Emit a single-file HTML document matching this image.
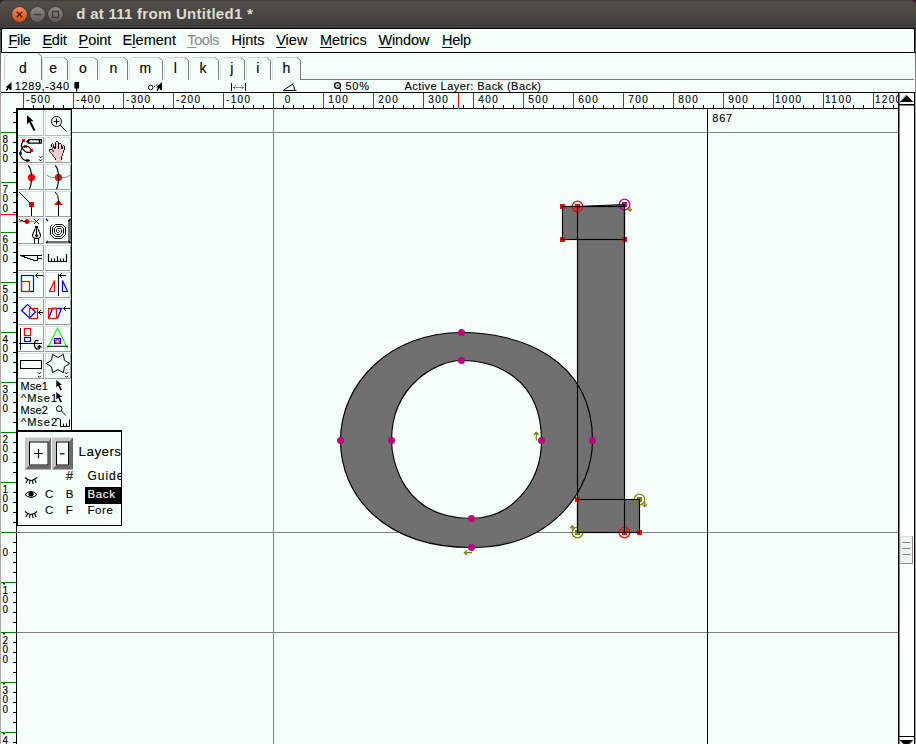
<!DOCTYPE html>
<html><head><meta charset="utf-8"><title>d at 111 from Untitled1 *</title>
<style>
html,body{margin:0;padding:0;background:#f5fffa;overflow:hidden}
svg{display:block;font-family:"Liberation Sans",sans-serif}
</style></head><body>
<svg width="916" height="744" viewBox="0 0 916 744">
<rect x="0" y="0" width="916" height="744" fill="#f5fffa"/>
<defs>
<linearGradient id="tb" x1="0" y1="0" x2="0" y2="1"><stop offset="0" stop-color="#3b3a36"/><stop offset="0.06" stop-color="#514f49"/><stop offset="1" stop-color="#3d3c38"/></linearGradient>
<linearGradient id="cl" x1="0" y1="0" x2="0" y2="1"><stop offset="0" stop-color="#f58a62"/><stop offset="1" stop-color="#dc4a1a"/></linearGradient>
<linearGradient id="gb" x1="0" y1="0" x2="0" y2="1"><stop offset="0" stop-color="#8a8983"/><stop offset="1" stop-color="#5d5c56"/></linearGradient>
</defs>
<rect x="0" y="0" width="916" height="29" fill="url(#tb)"/>
<path d="M0,0H4Q1,1 0,4Z" fill="#2a2622"/>
<path d="M916,0H912Q915,1 916,4Z" fill="#3a0f1d"/>
<circle cx="19.5" cy="14.5" r="8.1" fill="#363531"/><circle cx="19.5" cy="14.5" r="7.4" fill="url(#cl)"/>
<path d="M16.7,11.7L22.3,17.3M22.3,11.7L16.7,17.3" stroke="#4a1a08" stroke-width="1.4" fill="none"/>
<circle cx="37.5" cy="14.5" r="8.1" fill="#363531"/><circle cx="37.5" cy="14.5" r="7.4" fill="url(#gb)"/>
<path d="M34,14.5H41" stroke="#3c3b37" stroke-width="1.5"/>
<circle cx="55.5" cy="14.5" r="8.1" fill="#363531"/><circle cx="55.5" cy="14.5" r="7.4" fill="url(#gb)"/>
<rect x="52.5" y="11.5" width="6" height="6" fill="none" stroke="#3c3b37" stroke-width="1.3"/>
<text x="76.3" y="18.9" font-size="15" font-weight="bold" textLength="176.5" lengthAdjust="spacing" fill="#dfdbd2">d at 111 from Untitled1 *</text>
<linearGradient id="lf" x1="0" y1="0" x2="0" y2="1"><stop offset="0" stop-color="#3f3e3a"/><stop offset="0.04" stop-color="#6b6a66"/><stop offset="0.1" stop-color="#aba39e"/><stop offset="1" stop-color="#aba39e"/></linearGradient>
<rect x="0" y="29" width="1" height="715" fill="url(#lf)"/>
<rect x="915" y="29" width="1" height="715" fill="url(#lf)"/>
<rect x="1.5" y="28.5" width="913" height="24" fill="#f5fffa" stroke="#000" stroke-width="1"/>
<path d="M2.5,52V29.5H914" stroke="#ffffff" stroke-width="1" fill="none"/>
<text x="8.4" y="45" font-size="14.5" textLength="22.5" lengthAdjust="spacing" fill="#000" stroke="#000" stroke-width="0.12">File</text>
<rect x="8.4" y="47" width="8.9" height="1" fill="#000"/>
<text x="42.4" y="45" font-size="14.5" textLength="24.4" lengthAdjust="spacing" fill="#000" stroke="#000" stroke-width="0.12">Edit</text>
<rect x="42.4" y="47" width="9.7" height="1" fill="#000"/>
<text x="78.6" y="45" font-size="14.5" textLength="32.7" lengthAdjust="spacing" fill="#000" stroke="#000" stroke-width="0.12">Point</text>
<rect x="78.6" y="47" width="9.7" height="1" fill="#000"/>
<text x="122.6" y="45" font-size="14.5" textLength="53.4" lengthAdjust="spacing" fill="#000" stroke="#000" stroke-width="0.12">Element</text>
<rect x="132.3" y="47" width="3.2" height="1" fill="#000"/>
<text x="187.3" y="45" font-size="14.5" textLength="32.2" lengthAdjust="spacing" fill="#8c8c8c" stroke="#8c8c8c" stroke-width="0.12">Tools</text>
<rect x="187.3" y="47" width="8.9" height="1" fill="#8c8c8c"/>
<text x="231.4" y="45" font-size="14.5" textLength="33.2" lengthAdjust="spacing" fill="#000" stroke="#000" stroke-width="0.12">Hints</text>
<rect x="241.9" y="47" width="3.2" height="1" fill="#000"/>
<text x="276.2" y="45" font-size="14.5" textLength="31.2" lengthAdjust="spacing" fill="#000" stroke="#000" stroke-width="0.12">View</text>
<rect x="276.2" y="47" width="9.7" height="1" fill="#000"/>
<text x="319.9" y="45" font-size="14.5" textLength="46.8" lengthAdjust="spacing" fill="#000" stroke="#000" stroke-width="0.12">Metrics</text>
<rect x="319.9" y="47" width="12.1" height="1" fill="#000"/>
<text x="378.4" y="45" font-size="14.5" textLength="51.1" lengthAdjust="spacing" fill="#000" stroke="#000" stroke-width="0.12">Window</text>
<rect x="378.4" y="47" width="13.7" height="1" fill="#000"/>
<text x="442.0" y="45" font-size="14.5" textLength="29.2" lengthAdjust="spacing" fill="#000" stroke="#000" stroke-width="0.12">Help</text>
<rect x="442.0" y="47" width="10.5" height="1" fill="#000"/>
<path d="M301,79.5H914" stroke="#7a7a7a" stroke-width="1" fill="none"/>
<path d="M4.5,80V57.2L8,53.8" stroke="#cfcfcf" fill="none"/>
<path d="M8,53.6H38" stroke="#e6ebe8" fill="none"/>
<path d="M38,53.4L41.5,56.2V80" stroke="#7a7a7a" fill="none"/>
<text x="23" y="72.7" font-size="14" text-anchor="middle" fill="#000" stroke="#000" stroke-width="0.12">d</text>
<path d="M42.5,60.3L45,57.5H64" stroke="#cfcfcf" fill="none"/>
<path d="M42.5,61V80" stroke="#dfe5e2" fill="none"/>
<path d="M63.8,57.4L67.5,60.4V80" stroke="#7a7a7a" fill="none"/>
<text x="53.1" y="72.7" font-size="14" text-anchor="middle" fill="#000" stroke="#000" stroke-width="0.12">e</text>
<path d="M69.5,60.3L72,57.5H94" stroke="#cfcfcf" fill="none"/>
<path d="M69.5,61V80" stroke="#dfe5e2" fill="none"/>
<path d="M93.8,57.4L97.5,60.4V80" stroke="#7a7a7a" fill="none"/>
<text x="82.9" y="72.7" font-size="14" text-anchor="middle" fill="#000" stroke="#000" stroke-width="0.12">o</text>
<path d="M99.5,60.3L102,57.5H124" stroke="#cfcfcf" fill="none"/>
<path d="M99.5,61V80" stroke="#dfe5e2" fill="none"/>
<path d="M123.8,57.4L127.5,60.4V80" stroke="#7a7a7a" fill="none"/>
<text x="113.4" y="72.7" font-size="14" text-anchor="middle" fill="#000" stroke="#000" stroke-width="0.12">n</text>
<path d="M129.5,60.3L132,57.5H159" stroke="#cfcfcf" fill="none"/>
<path d="M129.5,61V80" stroke="#dfe5e2" fill="none"/>
<path d="M158.8,57.4L162.5,60.4V80" stroke="#7a7a7a" fill="none"/>
<text x="145.4" y="72.7" font-size="14" text-anchor="middle" fill="#000" stroke="#000" stroke-width="0.12">m</text>
<path d="M164.5,60.3L167,57.5H185" stroke="#cfcfcf" fill="none"/>
<path d="M164.5,61V80" stroke="#dfe5e2" fill="none"/>
<path d="M184.8,57.4L188.5,60.4V80" stroke="#7a7a7a" fill="none"/>
<text x="175.3" y="72.7" font-size="14" text-anchor="middle" fill="#000" stroke="#000" stroke-width="0.12">l</text>
<path d="M190.5,60.3L193,57.5H215" stroke="#cfcfcf" fill="none"/>
<path d="M190.5,61V80" stroke="#dfe5e2" fill="none"/>
<path d="M214.8,57.4L218.5,60.4V80" stroke="#7a7a7a" fill="none"/>
<text x="203" y="72.7" font-size="14" text-anchor="middle" fill="#000" stroke="#000" stroke-width="0.12">k</text>
<path d="M220.5,60.3L223,57.5H241" stroke="#cfcfcf" fill="none"/>
<path d="M220.5,61V80" stroke="#dfe5e2" fill="none"/>
<path d="M240.8,57.4L244.5,60.4V80" stroke="#7a7a7a" fill="none"/>
<text x="231.8" y="72.7" font-size="14" text-anchor="middle" fill="#000" stroke="#000" stroke-width="0.12">j</text>
<path d="M246.5,60.3L249,57.5H267" stroke="#cfcfcf" fill="none"/>
<path d="M246.5,61V80" stroke="#dfe5e2" fill="none"/>
<path d="M266.8,57.4L270.5,60.4V80" stroke="#7a7a7a" fill="none"/>
<text x="257.9" y="72.7" font-size="14" text-anchor="middle" fill="#000" stroke="#000" stroke-width="0.12">i</text>
<path d="M272.5,60.3L275,57.5H297" stroke="#cfcfcf" fill="none"/>
<path d="M272.5,61V80" stroke="#dfe5e2" fill="none"/>
<path d="M296.8,57.4L300.5,60.4V80" stroke="#7a7a7a" fill="none"/>
<text x="286.3" y="72.7" font-size="14" text-anchor="middle" fill="#000" stroke="#000" stroke-width="0.12">h</text>
<text x="14.8" y="89.7" font-size="11" textLength="54.2" lengthAdjust="spacing" fill="#000" stroke="#000" stroke-width="0.12">1289,-340</text>
<text x="345.4" y="89.7" font-size="11" textLength="23.6" lengthAdjust="spacing" fill="#000" stroke="#000" stroke-width="0.12">50%</text>
<text x="404.5" y="89.7" font-size="11" textLength="136.5" lengthAdjust="spacing" fill="#000" stroke="#000" stroke-width="0.12">Active Layer: Back (Back)</text>
<g shape-rendering="crispEdges">
<rect x="1" y="92" width="914" height="1" fill="#000"/>
<rect x="17" y="108" width="881" height="1" fill="#000"/>
<path d="M33.5,105V108M43.5,105V108M53.5,105V108M63.5,105V108M83.5,105V108M93.5,105V108M103.5,105V108M113.5,105V108M133.5,105V108M143.5,105V108M153.5,105V108M163.5,105V108M183.5,105V108M193.5,105V108M203.5,105V108M213.5,105V108M233.5,105V108M243.5,105V108M253.5,105V108M263.5,105V108M283.5,105V108M293.5,105V108M303.5,105V108M313.5,105V108M333.5,105V108M343.5,105V108M353.5,105V108M363.5,105V108M383.5,105V108M393.5,105V108M403.5,105V108M413.5,105V108M433.5,105V108M443.5,105V108M453.5,105V108M463.5,105V108M483.5,105V108M493.5,105V108M503.5,105V108M513.5,105V108M533.5,105V108M543.5,105V108M553.5,105V108M563.5,105V108M583.5,105V108M593.5,105V108M603.5,105V108M613.5,105V108M633.5,105V108M643.5,105V108M653.5,105V108M663.5,105V108M683.5,105V108M693.5,105V108M703.5,105V108M713.5,105V108M733.5,105V108M743.5,105V108M753.5,105V108M763.5,105V108M783.5,105V108M793.5,105V108M803.5,105V108M813.5,105V108M833.5,105V108M843.5,105V108M853.5,105V108M863.5,105V108M883.5,105V108M893.5,105V108" stroke="#000" stroke-width="1" fill="none"/>
<path d="M23.5,93V109M73.5,93V109M123.5,93V109M173.5,93V109M223.5,93V109M273.5,93V109M323.5,93V109M373.5,93V109M423.5,93V109M473.5,93V109M523.5,93V109M573.5,93V109M623.5,93V109M673.5,93V109M723.5,93V109M773.5,93V109M823.5,93V109M873.5,93V109" stroke="#008000" stroke-width="1" fill="none"/>
</g>
<text x="26.0" y="102.8" font-size="10" textLength="24.1" lengthAdjust="spacing" fill="#000" stroke="#000" stroke-width="0.12">-500</text>
<text x="76.0" y="102.8" font-size="10" textLength="24.1" lengthAdjust="spacing" fill="#000" stroke="#000" stroke-width="0.12">-400</text>
<text x="126.0" y="102.8" font-size="10" textLength="24.1" lengthAdjust="spacing" fill="#000" stroke="#000" stroke-width="0.12">-300</text>
<text x="176.0" y="102.8" font-size="10" textLength="24.1" lengthAdjust="spacing" fill="#000" stroke="#000" stroke-width="0.12">-200</text>
<text x="226.0" y="102.8" font-size="10" textLength="24.1" lengthAdjust="spacing" fill="#000" stroke="#000" stroke-width="0.12">-100</text>
<text x="284.7" y="102.8" font-size="10" textLength="6.5" lengthAdjust="spacing" fill="#000" stroke="#000" stroke-width="0.12">0</text>
<text x="328.2" y="102.8" font-size="10" textLength="19.6" lengthAdjust="spacing" fill="#000" stroke="#000" stroke-width="0.12">100</text>
<text x="378.2" y="102.8" font-size="10" textLength="19.6" lengthAdjust="spacing" fill="#000" stroke="#000" stroke-width="0.12">200</text>
<text x="428.2" y="102.8" font-size="10" textLength="19.6" lengthAdjust="spacing" fill="#000" stroke="#000" stroke-width="0.12">300</text>
<text x="478.2" y="102.8" font-size="10" textLength="19.6" lengthAdjust="spacing" fill="#000" stroke="#000" stroke-width="0.12">400</text>
<text x="528.2" y="102.8" font-size="10" textLength="19.6" lengthAdjust="spacing" fill="#000" stroke="#000" stroke-width="0.12">500</text>
<text x="578.2" y="102.8" font-size="10" textLength="19.6" lengthAdjust="spacing" fill="#000" stroke="#000" stroke-width="0.12">600</text>
<text x="628.2" y="102.8" font-size="10" textLength="19.6" lengthAdjust="spacing" fill="#000" stroke="#000" stroke-width="0.12">700</text>
<text x="678.2" y="102.8" font-size="10" textLength="19.6" lengthAdjust="spacing" fill="#000" stroke="#000" stroke-width="0.12">800</text>
<text x="728.2" y="102.8" font-size="10" textLength="19.6" lengthAdjust="spacing" fill="#000" stroke="#000" stroke-width="0.12">900</text>
<text x="774.9" y="102.8" font-size="10" textLength="26.2" lengthAdjust="spacing" fill="#000" stroke="#000" stroke-width="0.12">1000</text>
<text x="824.9" y="102.8" font-size="10" textLength="26.2" lengthAdjust="spacing" fill="#000" stroke="#000" stroke-width="0.12">1100</text>
<clipPath id="rc"><rect x="0" y="93" width="898" height="15"/></clipPath>
<text x="874.9" y="102.8" font-size="10" textLength="26.2" lengthAdjust="spacing" fill="#000" stroke="#000" stroke-width="0.12" clip-path="url(#rc)">1200</text>
<g shape-rendering="crispEdges">
<rect x="16" y="109" width="1" height="635" fill="#000"/>
<path d="M13,112.5H17M13,122.5H17M13,142.5H17M13,152.5H17M13,162.5H17M13,172.5H17M13,192.5H17M13,202.5H17M13,212.5H17M13,222.5H17M13,242.5H17M13,252.5H17M13,262.5H17M13,272.5H17M13,292.5H17M13,302.5H17M13,312.5H17M13,322.5H17M13,342.5H17M13,352.5H17M13,362.5H17M13,372.5H17M13,392.5H17M13,402.5H17M13,412.5H17M13,422.5H17M13,442.5H17M13,452.5H17M13,462.5H17M13,472.5H17M13,492.5H17M13,502.5H17M13,512.5H17M13,522.5H17M13,542.5H17M13,552.5H17M13,562.5H17M13,572.5H17M13,592.5H17M13,602.5H17M13,612.5H17M13,622.5H17M13,642.5H17M13,652.5H17M13,662.5H17M13,672.5H17M13,692.5H17M13,702.5H17M13,712.5H17M13,722.5H17M13,742.5H17" stroke="#000" stroke-width="1" fill="none"/>
<path d="M1,132.5H17M1,182.5H17M1,232.5H17M1,282.5H17M1,332.5H17M1,382.5H17M1,432.5H17M1,482.5H17M1,532.5H17M1,582.5H17M1,632.5H17M1,682.5H17M1,732.5H17" stroke="#008000" stroke-width="1" fill="none"/>
<rect x="1" y="214" width="15" height="1" fill="#ff0000"/>
<rect x="16" y="214" width="1" height="1" fill="#00ffff"/>
<rect x="458" y="93" width="1" height="15" fill="#ff0000"/>
<rect x="458" y="108" width="1" height="1" fill="#00ffff"/>
</g>
<text x="5.4" y="142.9" font-size="10" text-anchor="middle" fill="#000" stroke="#000" stroke-width="0.12">8</text>
<text x="5.4" y="152.2" font-size="10" text-anchor="middle" fill="#000" stroke="#000" stroke-width="0.12">0</text>
<text x="5.4" y="161.5" font-size="10" text-anchor="middle" fill="#000" stroke="#000" stroke-width="0.12">0</text>
<text x="5.4" y="192.9" font-size="10" text-anchor="middle" fill="#000" stroke="#000" stroke-width="0.12">7</text>
<text x="5.4" y="202.2" font-size="10" text-anchor="middle" fill="#000" stroke="#000" stroke-width="0.12">0</text>
<text x="5.4" y="211.5" font-size="10" text-anchor="middle" fill="#000" stroke="#000" stroke-width="0.12">0</text>
<text x="5.4" y="242.9" font-size="10" text-anchor="middle" fill="#000" stroke="#000" stroke-width="0.12">6</text>
<text x="5.4" y="252.2" font-size="10" text-anchor="middle" fill="#000" stroke="#000" stroke-width="0.12">0</text>
<text x="5.4" y="261.5" font-size="10" text-anchor="middle" fill="#000" stroke="#000" stroke-width="0.12">0</text>
<text x="5.4" y="292.9" font-size="10" text-anchor="middle" fill="#000" stroke="#000" stroke-width="0.12">5</text>
<text x="5.4" y="302.2" font-size="10" text-anchor="middle" fill="#000" stroke="#000" stroke-width="0.12">0</text>
<text x="5.4" y="311.5" font-size="10" text-anchor="middle" fill="#000" stroke="#000" stroke-width="0.12">0</text>
<text x="5.4" y="342.9" font-size="10" text-anchor="middle" fill="#000" stroke="#000" stroke-width="0.12">4</text>
<text x="5.4" y="352.2" font-size="10" text-anchor="middle" fill="#000" stroke="#000" stroke-width="0.12">0</text>
<text x="5.4" y="361.5" font-size="10" text-anchor="middle" fill="#000" stroke="#000" stroke-width="0.12">0</text>
<text x="5.4" y="392.9" font-size="10" text-anchor="middle" fill="#000" stroke="#000" stroke-width="0.12">3</text>
<text x="5.4" y="402.2" font-size="10" text-anchor="middle" fill="#000" stroke="#000" stroke-width="0.12">0</text>
<text x="5.4" y="411.5" font-size="10" text-anchor="middle" fill="#000" stroke="#000" stroke-width="0.12">0</text>
<text x="5.4" y="442.9" font-size="10" text-anchor="middle" fill="#000" stroke="#000" stroke-width="0.12">2</text>
<text x="5.4" y="452.2" font-size="10" text-anchor="middle" fill="#000" stroke="#000" stroke-width="0.12">0</text>
<text x="5.4" y="461.5" font-size="10" text-anchor="middle" fill="#000" stroke="#000" stroke-width="0.12">0</text>
<text x="5.4" y="492.9" font-size="10" text-anchor="middle" fill="#000" stroke="#000" stroke-width="0.12">1</text>
<text x="5.4" y="502.2" font-size="10" text-anchor="middle" fill="#000" stroke="#000" stroke-width="0.12">0</text>
<text x="5.4" y="511.5" font-size="10" text-anchor="middle" fill="#000" stroke="#000" stroke-width="0.12">0</text>
<text x="5.4" y="555.8" font-size="10" text-anchor="middle" fill="#000" stroke="#000" stroke-width="0.12">0</text>
<rect x="3" y="583" width="2" height="1.5" fill="#222"/>
<text x="5.4" y="594.0" font-size="10" text-anchor="middle" fill="#000" stroke="#000" stroke-width="0.12">1</text>
<text x="5.4" y="603.3" font-size="10" text-anchor="middle" fill="#000" stroke="#000" stroke-width="0.12">0</text>
<text x="5.4" y="612.6" font-size="10" text-anchor="middle" fill="#000" stroke="#000" stroke-width="0.12">0</text>
<rect x="3" y="633" width="2" height="1.5" fill="#222"/>
<text x="5.4" y="644.0" font-size="10" text-anchor="middle" fill="#000" stroke="#000" stroke-width="0.12">2</text>
<text x="5.4" y="653.3" font-size="10" text-anchor="middle" fill="#000" stroke="#000" stroke-width="0.12">0</text>
<text x="5.4" y="662.6" font-size="10" text-anchor="middle" fill="#000" stroke="#000" stroke-width="0.12">0</text>
<rect x="3" y="683" width="2" height="1.5" fill="#222"/>
<text x="5.4" y="694.0" font-size="10" text-anchor="middle" fill="#000" stroke="#000" stroke-width="0.12">3</text>
<text x="5.4" y="703.3" font-size="10" text-anchor="middle" fill="#000" stroke="#000" stroke-width="0.12">0</text>
<text x="5.4" y="712.6" font-size="10" text-anchor="middle" fill="#000" stroke="#000" stroke-width="0.12">0</text>
<rect x="3" y="733" width="2" height="1.5" fill="#222"/>
<text x="5.4" y="744.0" font-size="10" text-anchor="middle" fill="#000" stroke="#000" stroke-width="0.12">4</text>
<g shape-rendering="crispEdges">
<rect x="17" y="132" width="881" height="1" fill="#808080"/>
<rect x="17" y="532" width="881" height="1" fill="#808080"/>
<rect x="17" y="632" width="881" height="1" fill="#808080"/>
<rect x="273" y="109" width="1" height="635" fill="#808080"/>
<rect x="707" y="109" width="1" height="635" fill="#000"/>
</g>
<text x="712.3" y="121.7" font-size="11" textLength="19.9" lengthAdjust="spacing" fill="#000" stroke="#000" stroke-width="0.12">867</text>
<path d="M340.5,440.5C340.5,383.26 390.11,332.5 461.5,332.5C516.52,332.5 592.5,356.26 592.5,440.5C592.5,488.65 553.78,547.5 471.5,547.5C383.73,547.5 340.5,495.07 340.5,440.5ZM391.5,440.5C391.5,384.50 437.70,360.5 461.5,360.5C494.30,360.5 541.5,377.30 541.5,440.5C541.5,484.18 510.00,518.5 471.5,518.5C402.70,518.5 391.5,460.00 391.5,440.5Z" fill="#707070" fill-rule="evenodd" stroke="none"/>
<path d="M577.5,206.5L624.5,204.5V532.5H577.5Z" fill="#707070"/>
<rect x="562.5" y="206.5" width="62" height="33" fill="#707070"/>
<rect x="577.5" y="499.5" width="62" height="33" fill="#707070"/>
<rect x="560.0" y="204.0" width="5" height="5" fill="#ff0000" shape-rendering="crispEdges"/>
<rect x="560.0" y="237.0" width="5" height="5" fill="#ff0000" shape-rendering="crispEdges"/>
<rect x="622.0" y="237.0" width="5" height="5" fill="#ff0000" shape-rendering="crispEdges"/>
<rect x="575.0" y="497.0" width="5" height="5" fill="#ff0000" shape-rendering="crispEdges"/>
<rect x="637.0" y="530.0" width="5" height="5" fill="#ff0000" shape-rendering="crispEdges"/>
<rect x="575.0" y="204.0" width="5" height="5" fill="#ff0000" shape-rendering="crispEdges"/>
<circle cx="577.5" cy="206.5" r="5.3" fill="none" stroke="#ff0000" stroke-width="1.3"/>
<rect x="622.0" y="530.0" width="5" height="5" fill="#ff0000" shape-rendering="crispEdges"/>
<circle cx="624.5" cy="532.5" r="5.3" fill="none" stroke="#ff0000" stroke-width="1.3"/>
<rect x="622.0" y="202.0" width="5" height="5" fill="#c0007f" shape-rendering="crispEdges"/>
<circle cx="624.5" cy="204.5" r="5.3" fill="none" stroke="#c0007f" stroke-width="1.3"/>
<rect x="637.0" y="497.0" width="5" height="5" fill="#808000" shape-rendering="crispEdges"/>
<circle cx="639.5" cy="499.5" r="5.3" fill="none" stroke="#808000" stroke-width="1.3"/>
<rect x="575.0" y="530.0" width="5" height="5" fill="#808000" shape-rendering="crispEdges"/>
<circle cx="577.5" cy="532.5" r="5.3" fill="none" stroke="#808000" stroke-width="1.3"/>
<path d="M340.5,440.5C340.5,383.26 390.11,332.5 461.5,332.5C516.52,332.5 592.5,356.26 592.5,440.5C592.5,488.65 553.78,547.5 471.5,547.5C383.73,547.5 340.5,495.07 340.5,440.5Z" fill="none" stroke="#000" stroke-width="1.15"/>
<path d="M391.5,440.5C391.5,384.50 437.70,360.5 461.5,360.5C494.30,360.5 541.5,377.30 541.5,440.5C541.5,484.18 510.00,518.5 471.5,518.5C402.70,518.5 391.5,460.00 391.5,440.5Z" fill="none" stroke="#000" stroke-width="1.15"/>
<path d="M577.5,206.5L624.5,204.5V532.5H577.5Z" fill="none" stroke="#000" stroke-width="1.15"/>
<rect x="562.5" y="206.5" width="62" height="33" fill="none" stroke="#000" stroke-width="1.15"/>
<rect x="577.5" y="499.5" width="62" height="33" fill="none" stroke="#000" stroke-width="1.15"/>
<circle cx="340.5" cy="440.5" r="3.5" fill="#c0007f"/>
<circle cx="461.5" cy="332.5" r="3.5" fill="#c0007f"/>
<circle cx="592.5" cy="440.5" r="3.5" fill="#c0007f"/>
<circle cx="471.5" cy="547.5" r="3.5" fill="#c0007f"/>
<circle cx="391.5" cy="440.5" r="3.5" fill="#c0007f"/>
<circle cx="461.5" cy="360.5" r="3.5" fill="#c0007f"/>
<circle cx="541.5" cy="440.5" r="3.5" fill="#c0007f"/>
<circle cx="471.5" cy="518.5" r="3.5" fill="#c0007f"/>
<path d="M536.3,440.5V432.5M534,435L536.3,432.3L538.6,435" stroke="#808000" fill="none" stroke-width="1.2"/>
<path d="M472,552.7H464.5M467,550.4L464.3,552.7L467,555" stroke="#808000" fill="none" stroke-width="1.2"/>
<path d="M630,206.5V211M628,209L630,211.2L632,209" stroke="#808000" fill="none" stroke-width="1.2"/>
<path d="M644.7,501.5V506.3M642.5,504.3L644.7,506.6L647,504.3" stroke="#808000" fill="none" stroke-width="1.2"/>
<path d="M572.3,530V525.8M570.1,528L572.3,525.6L574.5,528" stroke="#808000" fill="none" stroke-width="1.2"/>
<rect x="17" y="109" width="55" height="322" fill="#f5fffa"/>
<g shape-rendering="crispEdges">
<rect x="16" y="108" width="2" height="324" fill="#000"/>
<rect x="16" y="108" width="56" height="2" fill="#000"/>
<rect x="71" y="108" width="1" height="323" fill="#000"/>
<rect x="16" y="430" width="106" height="2" fill="#000"/>

<rect x="43" y="110" width="1" height="26" fill="#b8b8b8"/>
<rect x="18" y="135" width="26" height="1" fill="#b8b8b8"/>
<rect x="45" y="110" width="1" height="26" fill="#dcdcdc"/>

<rect x="70" y="110" width="1" height="26" fill="#b8b8b8"/>
<rect x="45" y="135" width="26" height="1" fill="#b8b8b8"/>
<rect x="18" y="137" width="26" height="1" fill="#dcdcdc"/>
<rect x="43" y="137" width="1" height="26" fill="#9a9a9a"/>
<rect x="18" y="162" width="26" height="1" fill="#9a9a9a"/>
<rect x="45" y="137" width="1" height="26" fill="#dcdcdc"/>
<rect x="45" y="137" width="26" height="1" fill="#dcdcdc"/>
<rect x="70" y="137" width="1" height="26" fill="#9a9a9a"/>
<rect x="45" y="162" width="26" height="1" fill="#9a9a9a"/>
<rect x="18" y="164" width="26" height="1" fill="#dcdcdc"/>
<rect x="43" y="164" width="1" height="26" fill="#9a9a9a"/>
<rect x="18" y="189" width="26" height="1" fill="#9a9a9a"/>
<rect x="45" y="164" width="1" height="26" fill="#dcdcdc"/>
<rect x="45" y="164" width="26" height="1" fill="#dcdcdc"/>
<rect x="70" y="164" width="1" height="26" fill="#9a9a9a"/>
<rect x="45" y="189" width="26" height="1" fill="#9a9a9a"/>
<rect x="18" y="191" width="26" height="1" fill="#dcdcdc"/>
<rect x="43" y="191" width="1" height="26" fill="#9a9a9a"/>
<rect x="18" y="216" width="26" height="1" fill="#9a9a9a"/>
<rect x="45" y="191" width="1" height="26" fill="#dcdcdc"/>
<rect x="45" y="191" width="26" height="1" fill="#dcdcdc"/>
<rect x="70" y="191" width="1" height="26" fill="#9a9a9a"/>
<rect x="45" y="216" width="26" height="1" fill="#9a9a9a"/>
<rect x="18" y="218" width="26" height="1" fill="#dcdcdc"/>
<rect x="43" y="218" width="1" height="26" fill="#9a9a9a"/>
<rect x="18" y="243" width="26" height="1" fill="#9a9a9a"/>
<rect x="18" y="245" width="26" height="1" fill="#dcdcdc"/>
<rect x="43" y="245" width="1" height="26" fill="#9a9a9a"/>
<rect x="18" y="270" width="26" height="1" fill="#9a9a9a"/>
<rect x="45" y="245" width="1" height="26" fill="#dcdcdc"/>
<rect x="45" y="245" width="26" height="1" fill="#dcdcdc"/>
<rect x="70" y="245" width="1" height="26" fill="#9a9a9a"/>
<rect x="45" y="270" width="26" height="1" fill="#9a9a9a"/>
<rect x="18" y="272" width="26" height="1" fill="#dcdcdc"/>
<rect x="43" y="272" width="1" height="26" fill="#9a9a9a"/>
<rect x="18" y="297" width="26" height="1" fill="#9a9a9a"/>
<rect x="45" y="272" width="1" height="26" fill="#dcdcdc"/>
<rect x="45" y="272" width="26" height="1" fill="#dcdcdc"/>
<rect x="70" y="272" width="1" height="26" fill="#9a9a9a"/>
<rect x="45" y="297" width="26" height="1" fill="#9a9a9a"/>
<rect x="18" y="299" width="26" height="1" fill="#dcdcdc"/>
<rect x="43" y="299" width="1" height="26" fill="#9a9a9a"/>
<rect x="18" y="324" width="26" height="1" fill="#9a9a9a"/>
<rect x="45" y="299" width="1" height="26" fill="#dcdcdc"/>
<rect x="45" y="299" width="26" height="1" fill="#dcdcdc"/>
<rect x="70" y="299" width="1" height="26" fill="#9a9a9a"/>
<rect x="45" y="324" width="26" height="1" fill="#9a9a9a"/>
<rect x="18" y="326" width="26" height="1" fill="#dcdcdc"/>
<rect x="43" y="326" width="1" height="26" fill="#9a9a9a"/>
<rect x="18" y="351" width="26" height="1" fill="#9a9a9a"/>
<rect x="45" y="326" width="1" height="26" fill="#dcdcdc"/>
<rect x="45" y="326" width="26" height="1" fill="#dcdcdc"/>
<rect x="70" y="326" width="1" height="26" fill="#9a9a9a"/>
<rect x="45" y="351" width="26" height="1" fill="#9a9a9a"/>
<rect x="18" y="353" width="26" height="1" fill="#dcdcdc"/>
<rect x="43" y="353" width="1" height="26" fill="#9a9a9a"/>
<rect x="18" y="378" width="26" height="1" fill="#9a9a9a"/>
<rect x="45" y="353" width="1" height="26" fill="#dcdcdc"/>
<rect x="45" y="353" width="26" height="1" fill="#dcdcdc"/>
<rect x="70" y="353" width="1" height="26" fill="#9a9a9a"/>
<rect x="45" y="378" width="26" height="1" fill="#9a9a9a"/>
<rect x="45" y="218" width="26" height="26" fill="#ffffff"/>
<rect x="47" y="220" width="21" height="21" fill="#f5fffa"/>
<rect x="45" y="218" width="26" height="1" fill="#e4e4e4"/>
</g>
<path d="M71,218.5L68,221V241L71,243.6Z" fill="#707070"/>
<path d="M45.5,243.6L48.5,241H68L71,243.6Z" fill="#707070"/>
<path d="M46,219L48,221M70.5,219L68.5,221M46,243L48,241M70.5,243L68.5,241" stroke="#000" stroke-width="1.3"/>
<path d="M27,115V124.3L29.2,122.2L33.6,131L35.4,130L31,121.4L33.6,121.2Z" fill="#000"/>
<circle cx="56.5" cy="121.5" r="5" stroke="#000" stroke-width="1" fill="none"/>
<path d="M53.5,121.5H59.5M56.5,118.5V124.5M60.2,125.2L66.5,131.5" stroke="#000" stroke-width="1" fill="none"/>
<path d="M23.5,140.5L21.5,144L21.3,146L22,148L20.4,152V155L21.5,157.5L23.5,159.5L25.5,160.4H30M22,148L24,146.4L26,146L29,147L30.5,149L31.4,151L30.5,152.4H27L25,151.3L22.3,148.3" stroke="#000" stroke-width="1.1" fill="none" stroke-linejoin="round"/>
<path d="M28.8,139.7H41.3V143.2H28.8ZM39.4,139.7V143.2" stroke="#000" stroke-width="1.25" fill="#fff"/>
<path d="M28.6,139.3L25.8,141.5L28.6,143.7Z" fill="#000"/>
<rect x="22" y="139" width="3" height="3" fill="#ff0000"/>
<rect x="24" y="145" width="3.2" height="2.9" fill="#ff0000"/>
<rect x="30" y="149" width="3" height="2.9" fill="#ff0000"/>
<rect x="19" y="152" width="2.9" height="2.9" fill="#ff0000"/>
<rect x="26" y="159.1" width="3" height="2.9" fill="#ff0000"/>
<path d="M23.5,140L22.8,142M24.5,146.4H27M31.3,149.5V151.5M20.4,152V155M25.5,160.5H29.5" stroke="#000" stroke-width="1" fill="none"/>
<path d="M39,156.3L40.5,157.8L42,156.3M39,159.3L40.5,160.8L42,159.3" stroke="#000" stroke-width="1" fill="none"/>
<path d="M53.5,148.5H64.3V150L63.3,153L62.3,156.5L61.8,162H56V159.5L50,152V150H52.5Z" fill="#f2cccc"/>
<rect x="52" y="144" width="1.2" height="4.5" fill="#f2cccc"/>
<rect x="56" y="142" width="2.2" height="7" fill="#f2cccc"/>
<rect x="59" y="144" width="2.2" height="5" fill="#f2cccc"/>
<rect x="63" y="146" width="1.2" height="4" fill="#f2cccc"/>
<path d="M55.5,160V158.5L54.5,157.5L53.5,156.5L52.5,155L52.5,154.5L51.5,153.5L50.5,152.5L49.5,151.5V149.5H52.5M52.8,150L53.4,152M52.5,148.8V147.5M51.5,147V144.5L52.5,143.5L53.5,144.5V147.5L54.5,148.5V146.5M55.5,148.8V142.5L56.5,141.5H57.5L58.5,142.5V148.8M58.8,144L59.5,143.5H60.5L61.5,144.5V148.8M62.5,148.8V146.5L63.5,145.5L64.5,146.5V149.8L63.5,150.5V152.5L62.5,153.5V155.5L61.5,156.5V160" stroke="#000" stroke-width="1" fill="none" stroke-linejoin="miter"/>
<path d="M28,165.5Q31.5,168 31.5,177.5Q31.5,185 29.5,189" stroke="#000" stroke-width="1.2" fill="none"/>
<path d="M55,165.5Q58.5,168 58.5,177.5Q58.5,185 56.5,189" stroke="#000" stroke-width="1.2" fill="none"/>
<path d="M46.5,174.8Q49,177.5 53,177.5H64Q68,177.5 70.5,174.8" stroke="#707070" stroke-width=".8" fill="none"/>
<path d="M27.9,175.9L29.9,173.9H33.1L35.1,175.9V179.1L33.1,181.1H29.9L27.9,179.1Z" fill="#ff0000"/>
<path d="M31.5,173.5V181.5" stroke="#000" stroke-width="1"/>
<path d="M54.9,175.9L56.9,173.9H60.1L62.1,175.9V179.1L60.1,181.1H56.9L54.9,179.1Z" fill="#ff0000"/>
<path d="M58.5,173.5V181.5" stroke="#000" stroke-width="1"/>
<rect x="29" y="202" width="5" height="5" fill="#ff0000"/>
<path d="M19,192L31.5,204.5V216" stroke="#000" stroke-width="1" fill="none"/>
<path d="M54,205L58.5,200L63,205Z" fill="#ff0000"/>
<path d="M55,192Q58.5,194.5 58.5,200.5V216" stroke="#000" stroke-width="1" fill="none"/>
<path d="M19,221.5H36" stroke="#00ff00" stroke-width="1.1" fill="none"/>
<path d="M24.8,220.5L26,219H28L29.2,220.5V222.5L28,224H26L24.8,222.5Z" fill="#ff0000"/>
<rect x="19" y="219" width="1" height="1" fill="#000"/>
<path d="M20.3,220.5H22.8M22.8,221.5H28.8" stroke="#000" stroke-width="1" fill="none"/>
<path d="M34,219L39,224M39,219L34,224" stroke="#0000ff" stroke-width="1" fill="none"/>
<rect x="35" y="226" width="3" height="2.6" fill="#000"/>
<path d="M35,229L34,231.5L33,233.5L32.4,235.5L33,237L34.3,238.4H38.7L40,237L40.6,235.5L40,233.5L39,231.5L38,229M36.5,228.5V234.5M36.5,234.6L37.5,235.6L36.5,236.6L35.5,235.6ZM34.5,238.5V243.5M38.5,238.5V243.5" stroke="#000" stroke-width="1.1" fill="none"/>
<path d="M52.5,224.5L50.5,226.5L50.5,234.5L54.5,238.5L61.5,238.5L65.5,234.5L65.5,227.5L62.5,224.5L55.5,224.5L52.5,227.5L52.5,233.5L55.5,236.5L60.5,236.5L63.5,233.5L63.5,228.5L61.5,226.5L56.5,226.5L54.5,228.5L54.5,232.5L56.5,234.5L59.5,234.5L61.5,232.5L61.5,229.5L60.5,228.5L57.5,228.5L56.5,229.5L56.5,231.5L57.5,232.5L58.5,232.5L59.5,231.5L58.5,230.5L57.9,230.2" stroke="#000" stroke-width="1" fill="none" stroke-linejoin="miter"/>
<path d="M20,255.5H42M21.5,256.5H24.5M24,257.5H27.5M27,258.5H30.5M30,259.5H33.5M33,260.5H37.5V255.5M37.5,258.5H42" stroke="#000" stroke-width="1" fill="none"/>
<rect x="22.5" y="255.5" width="2.5" height="1.3" fill="#000"/>
<path d="M48.5,254V261.5H66.5V254M51.5,258.5V261.5M54.5,258.5V261.5M57.5,256.3V261.5M60.5,258.5V261.5M63.5,258.5V261.5" stroke="#000" stroke-width="1.2" fill="none"/>
<rect x="21.5" y="275.5" width="12" height="16" fill="none" stroke="#0000ff" stroke-width="1.2"/>
<rect x="21.5" y="281.5" width="8" height="10" fill="none" stroke="#ff0000" stroke-width="1.2"/>
<path d="M43,275.5H35.5M38,273L35.5,275.5L38,278" stroke="#000" stroke-width="1" fill="none"/>
<path d="M58.5,274V296M66,275.5H59.5M62,273L59.5,275.5L62,278" stroke="#000" stroke-width="1" fill="none"/>
<path d="M54.5,280.5V291.5H49.5Z" fill="none" stroke="#ff0000" stroke-width="1.2"/>
<path d="M62.5,280.5V291.5H67.5Z" fill="none" stroke="#0000ff" stroke-width="1.2"/>
<path d="M21.5,310.5L27.5,304.5L35.5,312L29.5,318Z" fill="none" stroke="#0000ff" stroke-width="1.2"/>
<rect x="29.5" y="308.5" width="8" height="10" fill="none" stroke="#ff0000" stroke-width="1.2"/>
<path d="M43,312.5H38.5M41,310L38.5,312.5L41,315" stroke="#000" stroke-width="1" fill="none"/>
<path d="M48.5,318.5L52.5,308.5H61.5L57.5,318.5" fill="none" stroke="#0000ff" stroke-width="1.3"/>
<rect x="48.5" y="308.5" width="8" height="10" fill="none" stroke="#ff0000" stroke-width="1.2"/>
<path d="M70,308.5H63.5M66,306L63.5,308.5L66,311" stroke="#000" stroke-width="1" fill="none"/>
<path d="M20.5,328V350M19,343.5H42" stroke="#000" stroke-width="1" fill="none"/>
<rect x="24.5" y="328.5" width="6" height="7" fill="none" stroke="#ff0000" stroke-width="1.2"/>
<rect x="24.5" y="337.5" width="6" height="4" fill="none" stroke="#0000ff" stroke-width="1.2"/>
<path d="M38.5,341Q36.5,339.5 35,341.5Q33.5,345 35.5,348Q37.5,350 39.5,348.5V346M37.5,347.5L39.5,345.5L41.5,347.5" stroke="#000" stroke-width="1.2" fill="none"/>
<path d="M47.5,348.5L57.5,328L67.5,348.5" fill="none" stroke="#00ff00" stroke-width="1.1"/>
<path d="M47,346.3H68" stroke="#000" stroke-width="1" fill="none"/>
<rect x="54.5" y="338.5" width="6" height="5" fill="none" stroke="#0000ff" stroke-width="1.2"/>
<path d="M55.8,343.2V340.3H56.8V339H58.2V340.3H59.2V343.2Z" fill="none" stroke="#ff0000" stroke-width="1"/>
<rect x="20.5" y="360.5" width="21" height="8" stroke="#000" stroke-width="1" fill="none"/>
<path d="M38,372.3L39.5,373.8L41,372.3M38,375.8L39.5,377.3L41,375.8" stroke="#000" stroke-width="1" fill="none"/>
<path d="M46.3,363.5L51.5,360.3L52.5,354.3L58,357.5L63.4,354.3L64.4,360.3L69.8,363.5L64.4,366.8L63.4,372.6L58,369.6L52.5,372.6L51.5,366.8Z" stroke="#000" stroke-width="1" fill="none"/>
<path d="M65,372.3L66.5,373.8L68,372.3M65,375.8L66.5,377.3L68,375.8" stroke="#000" stroke-width="1" fill="none"/>
<text x="20.6" y="390" font-size="11" textLength="27.3" lengthAdjust="spacing" fill="#000" stroke="#000" stroke-width="0.12">Mse1</text>
<text x="21" y="402" font-size="11" textLength="36" lengthAdjust="spacing" fill="#000" stroke="#000" stroke-width="0.12">^Mse1</text>
<text x="20.6" y="414" font-size="11" textLength="27.3" lengthAdjust="spacing" fill="#000" stroke="#000" stroke-width="0.12">Mse2</text>
<text x="21" y="426" font-size="11" textLength="36" lengthAdjust="spacing" fill="#000" stroke="#000" stroke-width="0.12">^Mse2</text>
<path d="M56.3,380V387.5L58.099999999999994,385.8L60.5,390.5L61.9,389.8L59.599999999999994,385.2L62.099999999999994,385Z" fill="#000"/>
<path d="M56.3,392V399.5L58.099999999999994,397.8L60.5,402.5L61.9,401.8L59.599999999999994,397.2L62.099999999999994,397Z" fill="#000"/>
<circle cx="59.2" cy="408.7" r="2.8" stroke="#000" stroke-width="1" fill="none"/><path d="M61.2,410.8L65.7,415.2" stroke="#000" stroke-width="1" fill="none"/>
<path d="M60.5,419.5V426.5H69.5V419.5M63.5,423.5V426.5M66.5,423.5V426.5M55.5,420L57.5,418L58.5,419M57.5,418L60.5,419.5" stroke="#000" stroke-width="1" fill="none" stroke-width=".9"/>
<rect x="18" y="432" width="103" height="93" fill="#f5fffa"/>
<g shape-rendering="crispEdges">
<rect x="16" y="430" width="2" height="96" fill="#000"/>
<rect x="121" y="430" width="1" height="96" fill="#000"/>
<rect x="16" y="525" width="106" height="1" fill="#000"/>
</g>
<path d="M25,437.5H51L48.5,441.5H29Z" fill="#c4c4c4"/><path d="M25,437.5V469.5L29,465.5V441.5Z" fill="#c4c4c4"/><path d="M25,469.5H51L48.5,465.5H29Z" fill="#6a6a6a"/><path d="M51,437.5V469.5L48.5,465.5V441.5Z" fill="#6a6a6a"/><rect x="29.5" y="442.0" width="18.5" height="23.0" fill="#f5fffa" stroke="#000" stroke-width="1"/>
<path d="M52,437.5H73L69,441.5H56Z" fill="#c4c4c4"/><path d="M52,437.5V469.5L56,465.5V441.5Z" fill="#c4c4c4"/><path d="M52,469.5H73L69,465.5H56Z" fill="#6a6a6a"/><path d="M73,437.5V469.5L69,465.5V441.5Z" fill="#6a6a6a"/><rect x="56.5" y="442.0" width="12" height="23.0" fill="#f5fffa" stroke="#000" stroke-width="1"/>
<path d="M38.5,449V458.2M34.2,453.5H42.8" stroke="#000" stroke-width="1.2" fill="none"/>
<path d="M60,453.8H64.5" stroke="#000" stroke-width="1.2" fill="none"/>
<clipPath id="lc"><rect x="18" y="432" width="103" height="93"/></clipPath>
<text x="78.6" y="455.6" font-size="13.5" textLength="42.5" lengthAdjust="spacing" fill="#000" stroke="#000" stroke-width="0.12" clip-path="url(#lc)">Layers</text>
<text x="66" y="480.3" font-size="13" fill="#000" stroke="#000" stroke-width="0.12">#</text>
<text x="87.4" y="480.3" font-size="12" textLength="36" lengthAdjust="spacing" fill="#000" stroke="#000" stroke-width="0.12" clip-path="url(#lc)">Guide</text>
<rect x="85" y="487" width="36" height="17" fill="#000" shape-rendering="crispEdges"/>
<text x="45" y="497.6" font-size="11.5" fill="#000" stroke="#000" stroke-width="0.12">C</text>
<text x="65.7" y="497.6" font-size="11.5" fill="#000" stroke="#000" stroke-width="0.12">B</text>
<text x="87.4" y="497.6" font-size="11.5" textLength="27.6" lengthAdjust="spacing" fill="#fff" stroke="#fff" stroke-width="0.12">Back</text>
<text x="45" y="514.4" font-size="11.5" fill="#000" stroke="#000" stroke-width="0.12">C</text>
<text x="65.7" y="514.4" font-size="11.5" fill="#000" stroke="#000" stroke-width="0.12">F</text>
<text x="87.4" y="514.4" font-size="11.5" textLength="25.6" lengthAdjust="spacing" fill="#000" stroke="#000" stroke-width="0.12">Fore</text>
<path d="M25,477.5Q31,483.5 37,477.5M27.5,480.0L26,483.0M30,480.7L29.5,484.0M32.5,480.7L33,484.0M34.8,480.0L36.2,483.0" stroke="#000" stroke-width="1.1" fill="none"/>
<path d="M25,511.5Q31,517.5 37,511.5M27.5,514.0L26,517.0M30,514.7L29.5,518.0M32.5,514.7L33,518.0M34.8,514.0L36.2,517.0" stroke="#000" stroke-width="1.1" fill="none"/>
<path d="M25,494.5Q31,488.5 37,494.5Q31,500.5 25,494.5Z" stroke="#000" stroke-width="1" fill="#fff"/>
<circle cx="31" cy="494" r="2.6" fill="#000"/>
<rect x="899" y="93" width="15" height="651" fill="#fff"/>
<g shape-rendering="crispEdges">
<rect x="898" y="93" width="1" height="651" fill="#000"/>
<rect x="899" y="93" width="1" height="651" fill="#7f7f7f"/>
<rect x="914" y="93" width="1" height="651" fill="#000"/>
<rect x="898" y="104" width="17" height="1" fill="#000"/>
<rect x="899" y="105" width="15" height="1" fill="#777"/>
<rect x="898" y="736" width="17" height="1" fill="#000"/>
</g>
<path d="M906.5,95L913.5,102H899.5Z" fill="#000"/>
<path d="M906.3,95.3L899.8,101.8" stroke="#a0a0a0" stroke-width="1"/>
<path d="M899.5,740H913.5L906.5,747Z" fill="#000"/>
<path d="M913.3,740.2L908.5,745" stroke="#a0a0a0" stroke-width="1"/>
<rect x="900.5" y="536.5" width="12" height="27" fill="#edf5f0" stroke="none"/>
<path d="M900.5,563V536.5H912.5" stroke="#d8dcd8" stroke-width="1" fill="none"/>
<path d="M912.5,536.5V563.5H900.5" stroke="#8c8c8c" stroke-width="1" fill="none"/>
<path d="M902.5,542.5H910.5M902.5,548.5H910.5M902.5,554.5H910.5" stroke="#808080" stroke-width="1" fill="none"/>
<path d="M11.5,82V90H10L8.8,88L7,91L5.8,90.3L7.6,87.5H5.5Z" fill="#000"/>
<path d="M75,82.5H78.5V88H75ZM76.7,88V91.5" stroke="#000" stroke-width="1.2" fill="#000"/>
<circle cx="150.7" cy="87.5" r="2.3" stroke="#000" stroke-width="1" fill="none"/>
<path d="M154,86.5L158,84.5" stroke="#000" stroke-width="1" stroke-dasharray="1.5,1"/>
<path d="M162,82V90H160.5L159.3,88L157.5,91L156.3,90.3L158.1,87.5H156Z" fill="#000"/>
<path d="M231.5,83V91M245.5,83V91" stroke="#000" stroke-width="1" fill="none"/>
<path d="M233.5,87.5H243.5M235.5,85.5L233.5,87.5L235.5,89.5M241.5,85.5L243.5,87.5L241.5,89.5" stroke="#000" stroke-width=".8" fill="none" stroke-dasharray="1.2,.8"/>
<path d="M293.5,83.5L283,90.5H296.5M292.5,84.5Q294.5,86.5 294.5,90" stroke="#000" stroke-width="1" fill="none"/>
<circle cx="337.5" cy="85.5" r="2.9" stroke="#000" stroke-width="1.35" fill="none"/>
<rect x="336.8" y="84.8" width="1.5" height="1.5" fill="#000"/>
<path d="M339.3,87.8L340.5,89.5V91.5" stroke="#000" stroke-width="1" fill="none"/>
</svg>
</body></html>
